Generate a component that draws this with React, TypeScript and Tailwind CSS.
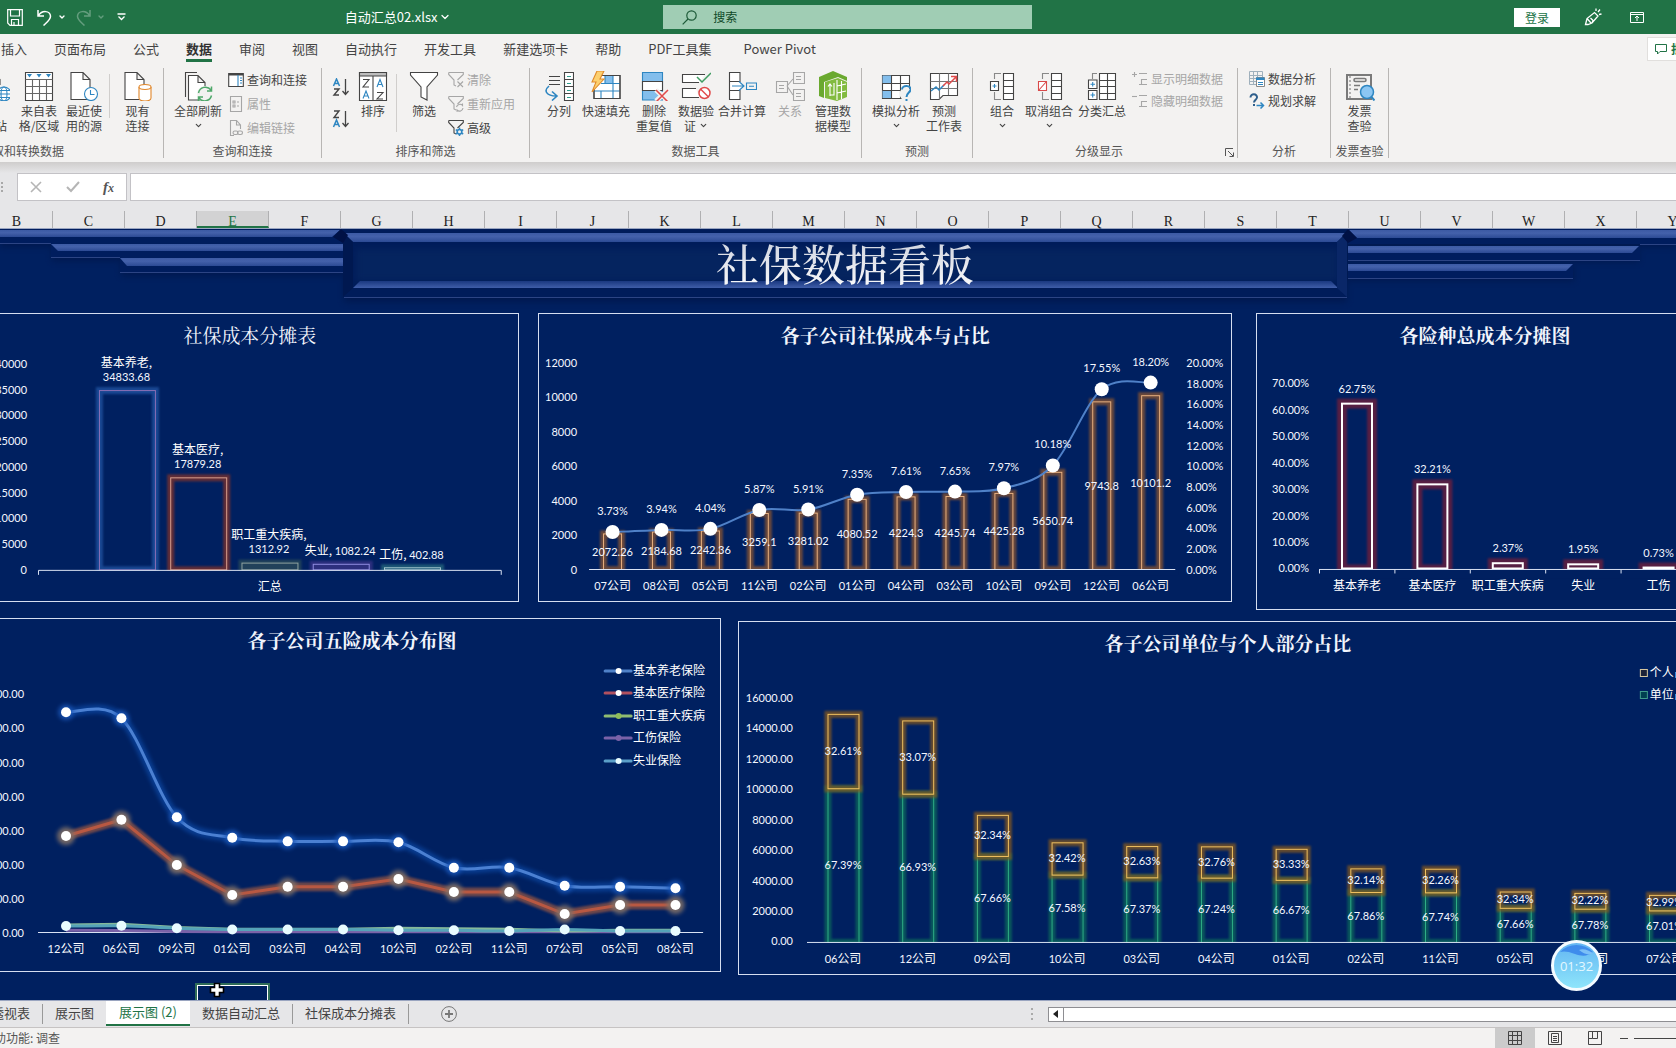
import React from "react";
import { ChevronDown } from "lucide-react";
import { clsx } from "clsx";

const INK = "#444444";
const BLUE = "#2e86c1";
const SKY = "#83beec";
const GREY = "#a6a6a6";

const LABEL = "fill-[#f4f7ff] text-[11px] font-['Lato','Noto_Sans_CJK_SC',sans-serif]";
const CJK = "fill-white text-[12px] font-['Noto_Sans_CJK_SC',sans-serif]";

type Point = { x: number; y: number };

// --- CHART DATA ---
const costShare = [
  { name: "基本养老", value: 34833.68, line: "#8a6fb5", glow: "#2458a8", wrap: true },
  { name: "基本医疗", value: 17879.28, line: "#d9a090", glow: "#8c3426", wrap: true },
  { name: "职工重大疾病", value: 1312.92, line: "#8fa3a0", glow: "#2f5058", wrap: true },
  { name: "失业", value: 1082.24, line: "#8f8ce0", glow: "#40368c", wrap: false },
  { name: "工伤", value: 402.88, line: "#a5c8d0", glow: "#2a7080", wrap: false },
];

const companyCost = [
  { id: "07", cost: 2072.26, rate: "3.73" },
  { id: "08", cost: 2184.68, rate: "3.94" },
  { id: "05", cost: 2242.36, rate: "4.04" },
  { id: "11", cost: 3259.1, rate: "5.87" },
  { id: "02", cost: 3281.02, rate: "5.91" },
  { id: "01", cost: 4080.52, rate: "7.35" },
  { id: "04", cost: 4224.3, rate: "7.61" },
  { id: "03", cost: 4245.74, rate: "7.65" },
  { id: "10", cost: 4425.28, rate: "7.97" },
  { id: "09", cost: 5650.74, rate: "10.18" },
  { id: "12", cost: 9743.8, rate: "17.55" },
  { id: "06", cost: 10101.2, rate: "18.20" },
];

const insuranceRate = [
  { name: "基本养老", rate: "62.75" },
  { name: "基本医疗", rate: "32.21" },
  { name: "职工重大疾病", rate: "2.37" },
  { name: "失业", rate: "1.95" },
  { name: "工伤", rate: "0.73" },
];

const lineCompanies = ["12", "06", "09", "01", "03", "04", "10", "02", "11", "07", "05", "08"];
const pension = [6476, 6300, 3388, 2788, 2682, 2682, 2653, 1906, 1906, 1376, 1347, 1300];
const medical = [2838, 3318, 1985, 1103, 1347, 1347, 1574, 1191, 1191, 544, 809, 809];
const illness = [225, 245, 150, 95, 95, 95, 125, 110, 100, 45, 70, 70];
const injury = [70, 60, 30, 20, 20, 20, 20, 20, 20, 20, 20, 20];
const jobless = [190, 200, 125, 90, 90, 90, 70, 65, 45, 90, 45, 45];

const lineLegend = [
  { name: "基本养老保险", color: "#4f81c8", dot: "#ffffff" },
  { name: "基本医疗保险", color: "#b0505f", dot: "#ffffff" },
  { name: "职工重大疾病", color: "#8fbc72", dot: "#8fbc5a" },
  { name: "工伤保险", color: "#7a62a8", dot: "#7a62a8" },
  { name: "失业保险", color: "#5b9fc8", dot: "#e8fbff" },
];

const unitShare = [
  { id: "06", unit: 10101.2, own: "32.61", corp: "67.39" },
  { id: "12", unit: 9743.8, own: "33.07", corp: "66.93" },
  { id: "09", unit: 5650.74, own: "32.34", corp: "67.66" },
  { id: "10", unit: 4425.28, own: "32.42", corp: "67.58" },
  { id: "03", unit: 4245.74, own: "32.63", corp: "67.37" },
  { id: "04", unit: 4224.3, own: "32.76", corp: "67.24" },
  { id: "01", unit: 4080.52, own: "33.33", corp: "66.67" },
  { id: "02", unit: 3281.02, own: "32.14", corp: "67.86" },
  { id: "11", unit: 3259.1, own: "32.26", corp: "67.74" },
  { id: "05", unit: 2242.36, own: "32.34", corp: "67.66" },
  { id: "08", unit: 2184.68, own: "32.22", corp: "67.78" },
  { id: "07", unit: 2072.26, own: "32.99", corp: "67.01" },
];

// --- CHART HELPERS ---
function smoothPath(points: Point[]) {
  let d = `M${points[0].x} ${points[0].y}`;
  for (let i = 0; i < points.length - 1; i++) {
    const before = points[i - 1] || points[i];
    const from = points[i];
    const to = points[i + 1];
    const after = points[i + 2] || to;
    d += ` C${from.x + (to.x - before.x) / 6} ${from.y + (to.y - before.y) / 6} ${to.x - (after.x - from.x) / 6} ${to.y - (after.y - from.y) / 6} ${to.x} ${to.y}`;
  }
  return d;
}

function straightPath(points: Point[]) {
  return points.map((p, i) => `${i ? "L" : "M"}${p.x} ${p.y}`).join(" ");
}

function Company({ id, x, y }: { id: string; x: number; y: number }) {
  return (
    <text x={x} y={y} textAnchor="middle" className={LABEL}>
      {id}
      <tspan className={CJK}>公司</tspan>
    </text>
  );
}

function ChartTitle({ x, bold = true, children }: { x: number; bold?: boolean; children: string }) {
  return (
    <text
      x={x}
      y={30}
      textAnchor="middle"
      className={clsx(
        "fill-[#f2f5fc] text-[19px] font-['Noto_Serif_CJK_SC','Noto_Sans_CJK_SC',sans-serif]",
        bold ? "font-bold" : "font-normal"
      )}
    >
      {children}
    </text>
  );
}

function GlowBar({ x, y, w, h, line, glow, stroke = 1 }: any) {
  return (
    <g fill="none">
      <rect x={x} y={y} width={w} height={h} stroke={glow} strokeWidth={7} className="blur-[1px]" opacity={0.7} />
      <rect x={x} y={y} width={w} height={h} stroke={line} strokeWidth={stroke} />
    </g>
  );
}

// --- CHARTS ---
function CostShareChart() {
  const base = 257;
  const y = (v: number) => base - (v / 40000) * 206;
  return (
    <svg viewBox="0 1 518 287" className="block w-full" role="img" aria-label="社保成本分摊表">
      <ChartTitle x={250} bold={false}>社保成本分摊表</ChartTitle>
      {Array.from({ length: 9 }, (_, i) => i * 5000).map((v) => (
        <text key={v} x={27} y={y(v) + 4} textAnchor="end" className={LABEL}>
          {v}
        </text>
      ))}
      {costShare.map((item, i) => {
        const left = 99.5 + i * 71.3;
        const top = y(item.value);
        return (
          <g key={item.name}>
            <GlowBar x={left} y={top} w={56} h={base - top} line={item.line} glow={item.glow} />
            {item.wrap ? (
              <>
                <text x={left + 27} y={top - 24} textAnchor="middle" className={CJK}>
                  {item.name},
                </text>
                <text x={left + 27} y={top - 10} textAnchor="middle" className={LABEL}>
                  {item.value}
                </text>
              </>
            ) : (
              <text x={left + 27} y={top - 9} textAnchor="middle" className={CJK}>
                {item.name}, <tspan className={LABEL}>{item.value}</tspan>
              </text>
            )}
          </g>
        );
      })}
      <rect x={36} y={base + 1} width={468} height={6} className="fill-[#002060]" />
      <path d={`M38.5 ${base + 5} v-4.5 h463 v4.5`} fill="none" stroke="#d9e2f3" />
      <text x={270} y={278} textAnchor="middle" className={CJK}>汇总</text>
    </svg>
  );
}

function CompanyCostChart() {
  const base = 256.5;
  const points = companyCost.map((c, i) => ({ x: 74.5 + i * 48.9, y: base + 1 - (Number(c.rate) / 20) * 206.5 }));
  return (
    <svg viewBox="1 1 692 287" className="block w-full" role="img" aria-label="各子公司社保成本与占比">
      <ChartTitle x={347}>各子公司社保成本与占比</ChartTitle>
      {[0, 2000, 4000, 6000, 8000, 10000, 12000].map((v) => (
        <text key={v} x={39} y={base - (v / 12000) * 206.5 + 4} textAnchor="end" className={LABEL}>
          {v}
        </text>
      ))}
      {Array.from({ length: 11 }, (_, i) => i * 2).map((v) => (
        <text key={v} x={648} y={base - (v / 20) * 206.5 + 4} className={LABEL}>
          {v.toFixed(2)}%
        </text>
      ))}
      {companyCost.map((c, i) => {
        const h = (c.cost / 12000) * 206.5;
        return <GlowBar key={c.id} x={points[i].x - 9} y={base - h} w={18} h={h} line="#e8b080" glow="#96592c" />;
      })}
      <rect x={48} y={base} width={592} height={6} className="fill-[#002060]" />
      <path d={`M51 ${base} h586`} stroke="#d9e2f3" />
      <path d={smoothPath(points)} fill="none" stroke="#4f81c8" strokeWidth={2} />
      {companyCost.map((c, i) => {
        const p = points[i];
        return (
          <g key={c.id}>
            <circle cx={p.x} cy={p.y} r={7} fill="#ffffff" />
            <text x={p.x} y={p.y - 17} textAnchor="middle" className={LABEL}>
              {c.rate}%
            </text>
            <text x={p.x} y={base - (c.cost / 24000) * 206.5 + 4} textAnchor="middle" className={LABEL}>
              {c.cost}
            </text>
            <Company id={c.id} x={p.x} y={277} />
          </g>
        );
      })}
    </svg>
  );
}

function InsuranceRateChart() {
  const base = 256.5;
  return (
    <svg viewBox="1 1 419 295" className="block w-full" role="img" aria-label="各险种总成本分摊图">
      <ChartTitle x={229}>各险种总成本分摊图</ChartTitle>
      {Array.from({ length: 8 }, (_, i) => i * 10).map((v) => (
        <text key={v} x={53} y={base - (v / 70) * 185 + 3} textAnchor="end" className={LABEL}>
          {v.toFixed(2)}%
        </text>
      ))}
      {insuranceRate.map((item, i) => {
        const x = 101 + i * 75.4;
        const h = (Number(item.rate) / 70) * 185;
        return (
          <g key={item.name}>
            <rect x={x - 15} y={base - h} width={30} height={h} fill="none" stroke="#6c1f3c" strokeWidth={10} className="blur-[1px]" opacity={0.8} />
            <rect x={x - 15} y={base - h} width={30} height={Math.max(h - 1, 2)} fill="none" stroke="#ffffff" strokeWidth={2} />
            <text x={x} y={base - h - 11} textAnchor="middle" className={LABEL}>
              {item.rate}%
            </text>
          </g>
        );
      })}
      <rect x={60} y={base} width={360} height={9} className="fill-[#002060]" />
      {insuranceRate.map((item, i) => {
        const x = 101 + i * 75.4;
        return (
          <g key={item.name}>
            <text x={x} y={277} textAnchor="middle" className={CJK}>
              {item.name}
            </text>
            <path d={`M${x - 37.5} ${base + 4} v-4`} stroke="#d9e2f3" />
          </g>
        );
      })}
      <path d={`M63 ${base} h357`} stroke="#d9e2f3" />
    </svg>
  );
}

function InsuranceLineChart() {
  const base = 314.5;
  const toPoints = (list: number[]) => list.map((v, i) => ({ x: 66 + i * 55.4, y: base - (v / 1000) * 34 }));
  const blue = toPoints(pension);
  const red = toPoints(medical);
  const teal = toPoints(jobless);
  return (
    <svg viewBox="0 1 720 352" className="block w-full" role="img" aria-label="各子公司五险成本分布图">
      <ChartTitle x={352}>各子公司五险成本分布图</ChartTitle>
      {Array.from({ length: 8 }, (_, i) => i * 1000).map((v) => (
        <text key={v} x={24} y={base - (v / 1000) * 34 + 4} textAnchor="end" className={LABEL}>
          {v.toFixed(2)}
        </text>
      ))}
      <path d={`M38 ${base} h665`} stroke="#d9e2f3" />
      <g fill="none">
        <path d={smoothPath(blue)} stroke="#0d4aa8" strokeWidth={9} opacity={0.7} className="blur-[2px]" />
        <path d={smoothPath(blue)} stroke="#4b80d2" strokeWidth={3} />
        <path d={straightPath(red)} stroke="#7c4c48" strokeWidth={9} opacity={0.9} className="blur-[1px]" />
        <path d={straightPath(red)} stroke="#b85842" strokeWidth={3} />
        <path d={straightPath(toPoints(injury))} stroke="#7a62a8" strokeWidth={3} />
        <path d={straightPath(toPoints(illness))} stroke="#85b99a" strokeWidth={3} />
        <path d={smoothPath(teal)} stroke="#55a3b8" strokeWidth={3} />
      </g>
      {blue.map((p, i) => (
        <g key={lineCompanies[i]}>
          <circle cx={p.x} cy={p.y} r={8} fill="#1a56b8" className="blur-[2px]" opacity={0.8} />
          <circle cx={p.x} cy={p.y} r={5} fill="#ffffff" />
          <circle cx={red[i].x} cy={red[i].y} r={9} fill="#807068" className="blur-[2px]" opacity={0.9} />
          <circle cx={red[i].x} cy={red[i].y} r={5} fill="#ffffff" />
          <circle cx={teal[i].x} cy={teal[i].y} r={5} fill="#e8fbff" />
          <Company id={lineCompanies[i]} x={p.x} y={335} />
        </g>
      ))}
      {lineLegend.map((item, i) => {
        const y = 53 + Math.floor(i * 22.5);
        return (
          <g key={item.name}>
            <path d={`M605 ${y} h26`} stroke={item.color} strokeWidth={3} strokeLinecap="round" />
            <circle cx={618.5} cy={y} r={3} fill={item.dot} />
            <text x={633} y={y + 4} className={CJK}>
              {item.name}
            </text>
          </g>
        );
      })}
    </svg>
  );
}

function UnitShareChart() {
  const base = 321.5;
  const scale = (v: number) => (v / 16000) * 243.5;
  return (
    <svg viewBox="1 1 937 352" className="block w-full" role="img" aria-label="各子公司单位与个人部分占比">
      <ChartTitle x={490}>各子公司单位与个人部分占比</ChartTitle>
      {Array.from({ length: 9 }, (_, i) => i * 2000).map((v) => (
        <text key={v} x={55} y={base - scale(v) + 3} textAnchor="end" className={LABEL}>
          {v.toFixed(2)}
        </text>
      ))}
      {unitShare.map((c, i) => {
        const x = 105 + i * 74.7;
        const unit = scale(c.unit);
        const total = scale((c.unit / Number(c.corp)) * 100);
        return (
          <g key={c.id}>
            <GlowBar x={x - 15} y={base - unit} w={31} h={unit} line="#2fae86" glow="#0d6e5a" />
            <GlowBar x={x - 15} y={base - total} w={31} h={total - unit} line="#f0c060" glow="#8c5c1c" />
            <text x={x} y={base - unit / 2 + 3} textAnchor="middle" className={LABEL}>
              {c.corp}%
            </text>
            <text x={x} y={base - (total + unit) / 2 + 3} textAnchor="middle" className={LABEL}>
              {c.own}%
            </text>
          </g>
        );
      })}
      <rect x={60} y={base} width={878} height={6} className="fill-[#002060]" />
      <path d={`M69 ${base} h869`} stroke="#d9e2f3" />
      {unitShare.map((c, i) => (
        <Company key={c.id} id={c.id} x={105 + i * 74.7} y={342} />
      ))}
      <rect x={902.5} y={48.5} width={7} height={7} fill="#1c2238" stroke="#d8c8a0" />
      <text x={912} y={56} className={CJK}>个人占比</text>
      <rect x={902.5} y={70.5} width={7} height={7} fill="#003f50" stroke="#3f9c8c" />
      <text x={912} y={78} className={CJK}>单位占比</text>
    </svg>
  );
}

function Banner() {
  return (
    <div className="relative">
      <svg viewBox="0 0 1676 84" className="block w-full" aria-hidden="true">
        <defs>
          <linearGradient id="shine" x1="0" y1="0" x2="0" y2="1">
            <stop offset="0" stopColor="#3c5aa4" />
            <stop offset="0.4" stopColor="#4461ab" />
            <stop offset="1" stopColor="#2c4a94" />
          </linearGradient>
          <linearGradient id="shineUp" x1="0" y1="0" x2="0" y2="1">
            <stop offset="0" stopColor="#1a3880" />
            <stop offset="1" stopColor="#3f5da8" />
          </linearGradient>
        </defs>
        {/* soft shadow under every plate */}
        <g fill="#001445" opacity="0.6" className="blur-[3px]">
          <rect x="0" y="5" width="341" height="13" />
          <rect x="52" y="19" width="291" height="13" />
          <rect x="121" y="33" width="222" height="14" />
          <rect x="344" y="4" width="1003" height="69" />
          <rect x="1348" y="4" width="328" height="14" />
          <rect x="1348" y="20" width="291" height="13" />
          <rect x="1348" y="38" width="226" height="14" />
        </g>
        <g fill="#001d5e">
          <rect x="0" y="0" width="343" height="14" />
          <rect x="51" y="14" width="292" height="14" />
          <rect x="120" y="28" width="223" height="15" />
          <rect x="1348" y="0" width="328" height="15" />
          <rect x="1348" y="17" width="292" height="14" />
          <rect x="1348" y="35" width="225" height="14" />
        </g>
        <g fill="url(#shine)">
          <path d="M0 1H340L332 8H0Z" />
          <path d="M51 15H343V22H58Z" />
          <path d="M120 29H343V37H127Z" />
          <path d="M1349 1H1676V9H1357Z" />
          <path d="M1348 17H1639L1632 24H1348Z" />
          <path d="M1348 35H1573L1566 42H1348Z" />
        </g>
        <rect x="343" y="0" width="1004" height="68" fill="#001c5a" />
        <rect x="356" y="20" width="982" height="32" fill="#05245f" className="blur-[3px]" />
        <path d="M344 4H1346L1337 13H353Z" fill="url(#shine)" />
        <path d="M360 52H1331L1338 59H353Z" fill="url(#shineUp)" />
        <path d="M343 4L353 13V59L343 68Z" fill="#001850" />
        <path d="M1347 4L1337 13V59L1347 68Z" fill="#0a2768" />
        <path d="M333 8L341 0L348 6L343 14ZM1342 7L1348 0L1357 9L1348 14Z" fill="#001145" />
        <path
          d="M0 14.5H51M51 28.5H120M120 43.5H343M344 68.5H1347M1640 15.5H1676M1348 31.5H1640M1348 49.5H1573"
          stroke="#2c4484"
        />
      </svg>
      <h1 className="absolute inset-x-0 top-1 bg-linear-to-b from-[#c9cedb] to-white bg-clip-text pl-[14px] text-center font-['Noto_Serif_CJK_SC','Noto_Sans_CJK_SC',sans-serif] text-[43px] leading-[60px] font-medium text-transparent">
        社保数据看板
      </h1>
    </div>
  );
}

// --- ICONS ---
function Icon({ size = 30, box = 30, children }: { size?: number; box?: number; children: React.ReactNode }) {
  return (
    <svg
      width={size}
      height={size}
      viewBox={`0 0 ${box} ${box}`}
      fill="none"
      stroke={INK}
      strokeWidth={1.1}
      className="shrink-0"
      aria-hidden="true"
    >
      {children}
    </svg>
  );
}

const page = "M2 1.5H14L21 8.5V28.5H2ZM14 1.5V8.5H21";

const WebIcon = () => (
  <Icon>
    <path d="M4 1.5H14L20 8.5V14M14 1.5V8.5H20M4 1.5V28.5H12" fill="#fff" />
    <g stroke={BLUE} transform="translate(1 0)">
      <circle cx="23" cy="23" r="7" fill="#fff" />
      <ellipse cx="23" cy="23" rx="3" ry="7" />
      <path d="M16 23H30M17 19.5H29M17 26.5H29" />
    </g>
  </Icon>
);

const TableIcon = () => (
  <Icon>
    <path d="M1.5 1.5H28.5V29.5H1.5Z" fill="#fff" />
    <path d="M1.5 8.5H28.5M1.5 15.5H28.5M1.5 22.5H28.5M8.5 8V29M15.5 8V29M22.5 8V29" stroke="#666" />
    <path d="M3 3h5l-2.5 3.5ZM12.5 3h5l-2.5 3.5ZM22 3h5l-2.5 3.5Z" fill={BLUE} stroke="none" />
  </Icon>
);

const RecentIcon = () => (
  <Icon>
    <path d={page} fill="#fff" />
    <circle cx="22" cy="23" r="6.5" fill="#fff" stroke={BLUE} />
    <path d="M21.5 19V23.5H25.5" stroke={BLUE} />
  </Icon>
);

const ConnectionIcon = () => (
  <Icon>
    <path d={page} fill="#fff" />
    <path d="M16 16V27C16 31 28 31 28 27V16" fill="#fff" stroke="#e0872b" />
    <ellipse cx="22" cy="16" rx="6" ry="2.5" fill="#fff" stroke="#e0872b" />
  </Icon>
);

const RefreshAllIcon = () => (
  <Icon>
    <path d="M2.5 26V1.5H14" />
    <path d="M5.5 4.5H15L22 11.5V29H5.5ZM15 4.5V11.5H22" fill="#fff" />
    <circle cx="22" cy="23" r="8" fill="#f3f2f1" stroke="none" />
    <path
      d="M15.5 22A7 7 0 0 1 28 19M28.5 15.5V20H24M28.5 24.5A7 7 0 0 1 16 27M15.5 30.5V26H20"
      stroke="#4ea86a"
      strokeWidth="1.5"
    />
  </Icon>
);

const SortIcon = () => (
  <Icon>
    <path d="M1.5 1.5H28.5V29.5H1.5Z" fill="#fff" />
    <path d="M1.5 1.5H28.5V5H1.5Z" fill="#bdbdbd" />
    <path d="M15 5V29" />
    <path d="M5 8.5H11L5 16H11M19 21.5H25L19 28H25" />
    <path d="M5 27.5L8 20L11 27.5M6 25H10M19 16L22 8.5L25 16M20 13.5H24" stroke={BLUE} />
  </Icon>
);

const FilterIcon = () => (
  <Icon>
    <path d="M1.5 1.5H28.5V4L18 16V29L12 26V16L1.5 4Z" fill="#fff" />
  </Icon>
);

const SplitIcon = () => (
  <Icon>
    <path d="M5 5.5H16M5 9.5H16M5 13.5H16" />
    <path d="M20.5 1.5H29.5V29.5H20.5ZM20.5 8.5H29.5M20.5 15.5H29.5M20.5 22.5H29.5" fill="#fff" />
    <path d="M23 5.5H27M23 12.5H27M23 19.5H27M23 26.5H27" stroke="#2f9c8c" />
    <path d="M5 15C-1 20 3 25 12 25M8 20.5L13 25L8 29.5" stroke={BLUE} strokeWidth="1.6" />
  </Icon>
);

const FlashFillIcon = () => (
  <Icon>
    <path d="M4 4.5H29V27.5H3V18" fill="#fff" />
    <path d="M14 4.5H22V12H14Z" fill={SKY} stroke="none" />
    <path d="M3 20H29M10 12.5H29M14 4.5V12M22 4.5V27M10 20V27" stroke={BLUE} />
    <path d="M4 4.5H29V27.5H3V18" />
    <path d="M6 0H13L9 8H13L1 21L5 11H1Z" fill="#fcd070" stroke="#e08a2a" />
  </Icon>
);

const DedupeIcon = () => (
  <Icon>
    <path d="M3.5 1.5H23.5V29H3.5Z" fill={SKY} stroke={BLUE} />
    <path d="M3.5 10.5H23.5V19.5H3.5Z" fill="#fff" stroke={INK} />
    <path d="M17 19L29 30M29 19L17 30" stroke="#f3f2f1" strokeWidth="5" />
    <path d="M17 19L29 31M29 19L17 31" stroke="#e04a4a" strokeWidth="1.5" />
  </Icon>
);

const ValidateIcon = () => (
  <Icon>
    <path d="M24 3.5H1.5V11.5H18M15 17.5H1.5V26.5H18" fill="#fff" />
    <path d="M16 6L21 11L30 2" stroke="#3f9c62" strokeWidth="1.5" />
    <circle cx="23.5" cy="22" r="5.5" fill="#fff" stroke="#e04a4a" strokeWidth="1.5" />
    <path d="M19.5 18L27.5 26" stroke="#e04a4a" strokeWidth="1.5" />
  </Icon>
);

const ConsolidateIcon = () => (
  <Icon>
    <path d="M13 11V1.5H2.5V28.5H13V19M2.5 10.5H13M2.5 19.5H13" fill="#fff" />
    <path d="M5 15H17M12 10.5L17 15L12 19.5M19.5 12H29.5V18.5H19.5ZM22 15.2H27" stroke={BLUE} />
  </Icon>
);

const RelationIcon = () => (
  <Icon>
    <g stroke={GREY}>
      <path d="M1.5 10.5H12.5V21.5H1.5ZM18.5 1.5H29.5V12.5H18.5ZM18.5 18.5H29.5V29.5H18.5Z" />
      <path d="M4 14.5H9M4 17.5H9M21 5.5H26M21 8.5H26M21 22.5H26M21 25.5H26M12 15L18 8M12 15L18 24" />
    </g>
  </Icon>
);

const ModelIcon = () => (
  <Icon>
    <path d="M1 6L15 0L29 6V10L20 6L6 11V27L1 25Z" fill="#6aa92f" stroke="none" />
    <path d="M7 11L20 7L29 11V26L19 30L7 27Z" fill="#82bb3f" stroke="none" />
    <path d="M19 9V29M19 15L28 13M19 22L28 20M23.5 10V28M12 13V25M10 15.5L12 13L14 15.5M12 24H16V12" stroke="#fff" />
  </Icon>
);

const WhatIfIcon = () => (
  <Icon>
    <path d="M1.5 4.5H28.5V27.5H1.5Z" fill="#fff" />
    <path d="M1.5 4.5H10V12H1.5ZM1.5 19.5H10V27H1.5Z" fill={SKY} stroke="none" />
    <path d="M1.5 12.5H28.5M1.5 19.5H28.5M10.5 4.5V27M19.5 4.5V27" />
    <circle cx="25" cy="23" r="6.5" fill="#f3f2f1" stroke="none" />
    <path d="M21 18.5C21 13.5 30.5 14 29.5 19C29 21.5 25.5 22 25.5 26M25.5 28V30.5" stroke={BLUE} strokeWidth="2" />
  </Icon>
);

const ForecastIcon = () => (
  <Icon>
    <path d="M1.5 2.5H28.5V24.5H14L10 28.5H1.5Z" fill="#fff" />
    <path d="M1.5 10.5H28.5M1.5 17.5H28.5M10.5 2.5V28M19.5 2.5V24" stroke="#777" />
    <path d="M2 20L7 16L10 19L15 14" stroke={BLUE} strokeWidth="1.5" />
    <path d="M14 15L18 11L20 13L27 6M22 5.5H27.5V11" stroke="#e04a4a" strokeWidth="1.5" />
  </Icon>
);

const GroupIcon = () => (
  <Icon>
    <path d="M16.5 2.5H26.5V28.5H16.5ZM16.5 9.5H26.5M16.5 15.5H26.5M16.5 22.5H26.5" fill="#fff" />
    <path d="M14 2.5H7.5V8M7.5 21V28.5H14" stroke="#888" />
    <path d="M3.5 10.5H11.5V19.5H3.5Z" fill="#fff" />
    <path d="M5.5 15H9.5M7.5 13V17" stroke={BLUE} />
  </Icon>
);

const UngroupIcon = () => (
  <Icon>
    <path d="M17.5 2.5H27.5V28.5H17.5ZM17.5 9.5H27.5M17.5 15.5H27.5M17.5 22.5H27.5" fill="#fff" />
    <path d="M15 2.5H8.5V8M8.5 21V28.5H15" stroke="#888" />
    <path d="M4.5 10.5H12.5V19.5H4.5ZM4.5 19.5L12.5 10.5" fill="#fff" stroke="#d94a4a" />
  </Icon>
);

const SubtotalIcon = () => (
  <Icon>
    <path d="M12.5 2.5H28.5V28.5H12.5ZM12.5 9.5H28.5M12.5 15.5H28.5M12.5 22.5H28.5M20.5 2.5V28.5" fill="#fff" />
    <path d="M10 2.5H5.5V8" stroke="#888" />
    <path d="M1.5 9H10V17.5H1.5ZM1.5 19.5H10V28.5H1.5Z" fill="#fff" />
    <path d="M3.5 13.2H8M5.7 11V15.5M3.5 24H8M5.7 21.5V26.5" stroke={BLUE} />
  </Icon>
);

const InvoiceIcon = () => (
  <Icon>
    <path d="M2 4H26V28H2Z" stroke="#7a7a7a" strokeWidth="2" />
    <path d="M5 5V28" stroke="#7a7a7a" strokeDasharray="2 2" />
    <rect x="9" y="7.5" width="12" height="3" rx="1.5" stroke="#7a7a7a" strokeWidth="1.6" />
    <path d="M9 14.5H15M9 18.5H13" stroke="#7a7a7a" strokeWidth="1.6" />
    <circle cx="22" cy="21" r="6.5" fill="#8cc6f2" stroke={BLUE} strokeWidth="1.5" />
    <path d="M26.5 26L29.5 29.5" stroke={BLUE} strokeWidth="2" />
  </Icon>
);

function SortArrow({ reverse = false }: { reverse?: boolean }) {
  return (
    <Icon size={18} box={18}>
      <path d={reverse ? "M2 1H7L2 7.5H7" : "M2 11H7L2 17H7"} strokeWidth="1.4" />
      <path
        d={reverse ? "M1.5 17L4.5 10L7.5 17M2.5 14.5H6.5" : "M1.5 8L4.5 1L7.5 8M2.5 5.5H6.5"}
        stroke={BLUE}
        strokeWidth="1.5"
      />
      <path d="M13.5 1V16.5M10.5 13L13.5 16.5L16.5 13" strokeWidth="1.3" />
    </Icon>
  );
}

const PaneIcon = () => (
  <Icon size={16} box={16}>
    <path d="M.7 1.5H15.3V14.5H.7Z" fill="#fff" />
    <path d="M.7 2.5H15.3" strokeWidth="2" />
    <path d="M10 3V14" stroke={BLUE} />
    <path d="M12 6H14M12 8.5H14M12 11H14" stroke={BLUE} />
  </Icon>
);

const PropertyIcon = () => (
  <Icon size={16} box={16}>
    <g stroke={GREY}>
      <path d="M2.5 .5H13.5V15.5H2.5Z" />
      <path d="M5 5H7V7H5ZM5 9H7V11H5ZM9 6H11M9 10H11" />
    </g>
  </Icon>
);

const EditLinkIcon = () => (
  <Icon size={16} box={16}>
    <g stroke={GREY}>
      <path d="M6 15.5H2.5V.5H8.5L12.5 5V9M8.5 .5V5H12.5" />
      <rect x="5" y="11" width="5" height="3.5" rx="1.7" />
      <rect x="9.5" y="11" width="5" height="3.5" rx="1.7" />
    </g>
  </Icon>
);

function SmallFilter({ kind }: { kind: "clear" | "reapply" | "advanced" }) {
  const on = kind === "advanced";
  return (
    <Icon size={16} box={16}>
      <path d="M.7 .5H15.3V2.5L9.5 8M.7 .5V2.5L6 8V13L8 14" stroke={on ? INK : GREY} />
      {kind === "clear" && <path d="M9.5 9.5L15 15M15 9.5L9.5 15" stroke={GREY} />}
      {kind === "reapply" && (
        <path d="M8.5 11A3.5 3.5 0 0 1 14.5 9.5V7.5M15 12A3.5 3.5 0 0 1 9 14V15.7" stroke={GREY} />
      )}
      {on && (
        <g stroke={BLUE}>
          <circle cx="11.5" cy="11.8" r="2.3" strokeWidth="1.6" />
          <path
            d="M11.5 7.5V9M11.5 14.5V16M7.8 9.7L9.2 10.5M13.8 13.2L15.2 14M15.2 9.7L13.8 10.5M9.2 13.2L7.8 14"
            strokeWidth="1.5"
          />
        </g>
      )}
    </Icon>
  );
}

function DetailIcon({ plus = false }: { plus?: boolean }) {
  return (
    <Icon size={16} box={16}>
      <g stroke={GREY}>
        <path d={plus ? "M0 3.5H5M2.5 1V6" : "M0 3.5H5"} />
        <path d="M7 2.5H15M9.5 8.5H15M7 13.5H15M9.5 8V13" />
      </g>
    </Icon>
  );
}

const AnalysisIcon = () => (
  <Icon size={16} box={16}>
    <path d="M.5 .5H13.5V13.5H.5ZM.5 4.5H13.5M.5 7.5H8M.5 10.5H8M4.5 .5V14M8.5 .5V6" stroke="#9fb0bc" strokeWidth="1" />
    <path d="M7.5 6.5H15.5V15.5H7.5Z" fill="#fff" stroke="#888" strokeWidth="1" />
    <path d="M7 6.5H15.5V9H7Z" fill={BLUE} stroke="none" />
    <path d="M9 11.5H14M9 13.5H14" stroke={BLUE} strokeWidth="1" />
  </Icon>
);

const SolverIcon = () => (
  <Icon size={16} box={16}>
    <path d="M1.5 4.5C1.5 0 8.5 .5 8 4.5C7.8 6.5 5 7 5 9.5M5 11V13" stroke="#2f5f8c" strokeWidth="2" />
    <path d="M7.5 12.5H14.5M11.5 9.5L14.5 12.5L11.5 15.5" stroke={BLUE} strokeWidth="1.5" />
  </Icon>
);

// --- RIBBON PARTS ---
function BigButton({ icon, lines, width, arrow, muted }: any) {
  return (
    <button
      type="button"
      disabled={muted}
      className={clsx("flex shrink-0 flex-col items-center pt-[3px]", width, muted ? "text-[#a6a6a6]" : "text-[#444]")}
    >
      {icon}
      <span className="mt-[2px] block text-[12px] leading-[15px] whitespace-nowrap">{lines[0]}</span>
      <span className="flex h-[15px] items-center text-[12px] leading-[15px] whitespace-nowrap">
        {lines[1]}
        {arrow && <ChevronDown className={clsx("h-[9px] w-[9px]", lines[1] && "ml-[3px]")} strokeWidth={3} />}
      </span>
    </button>
  );
}

function SmallButton({ icon, label, muted, height = "h-6" }: any) {
  return (
    <button
      type="button"
      disabled={muted}
      className={clsx(
        "flex items-center gap-[3px] text-[12px] whitespace-nowrap",
        height,
        muted ? "text-[#a6a6a6]" : "text-[#444]"
      )}
    >
      {icon}
      {label}
    </button>
  );
}

function Group({ label, className, launcher, children }: any) {
  return (
    <section className={clsx("flex h-[90px] shrink-0 flex-col border-r border-[#b8b6b4]", className)} aria-label={label}>
      <div className="flex flex-1">{children}</div>
      <div className="flex h-[14px] items-center text-[12px] leading-[14px] text-[#555]">
        <span className="flex-1 text-center whitespace-nowrap">{label}</span>
        {launcher && (
          <button type="button" aria-label="分级显示设置" className="pr-[2px]">
            <svg width="10" height="10" viewBox="0 0 10 10" fill="none" stroke="#555" className="mt-1">
              <path d="M.5 8V.5H8M3 3L8 8M8.5 4.5V8.5H4.5" />
            </svg>
          </button>
        )}
      </div>
    </section>
  );
}

const Divider = ({ className }: { className: string }) => <div className={clsx("mt-[6px] w-px bg-[#d0cecc]", className)} />;

const ribbonTabs = ["插入", "页面布局", "公式", "数据", "审阅", "视图", "自动执行", "开发工具", "新建选项卡", "帮助", "PDF工具集", "Power Pivot"];
const columns = "BCDEFGHIJKLMNOPQRSTUVWXY".split("");

function TitleBar() {
  return (
    <header className="flex h-[34px] shrink-0 items-center bg-[#217346] text-white">
      <div className="flex flex-[664_1_0%] items-center pr-[25px] pl-[7px]">
        <button type="button" aria-label="保存">
          <svg width="16" height="17" viewBox="0 0 16 17" fill="none" stroke="#fff" strokeWidth="1.2">
            <path d="M.7 .7H15.3V16.3H3L.7 14ZM3.5 .7V7H12.5V.7M4.5 16V10.5H11.5V16M7 13V16" />
          </svg>
        </button>
        <button type="button" aria-label="撤消" className="ml-[14px] flex items-center gap-[6px]">
          <svg width="15" height="17" viewBox="0 0 15 17" fill="none" stroke="#fff" strokeWidth="1.5">
            <path d="M1 1V7H7M1.5 6.5C5 1 13 1.5 13.5 7C13.7 10.5 10 13 6.5 16.5" />
          </svg>
          <ChevronDown className="h-2 w-2" strokeWidth={4} />
        </button>
        <button type="button" disabled aria-label="恢复" className="ml-[10px] flex items-center gap-[6px] opacity-30">
          <svg width="15" height="17" viewBox="0 0 15 17" fill="none" stroke="#fff" strokeWidth="1.5">
            <path d="M14 1V7H8M13.5 6.5C10 1 2 1.5 1.5 7C1.3 10.5 5 13 8.5 16.5" />
          </svg>
          <ChevronDown className="h-2 w-2" strokeWidth={4} />
        </button>
        <button type="button" aria-label="自定义快速访问工具栏" className="ml-[12px]">
          <svg width="9" height="8" viewBox="0 0 9 8" fill="none" stroke="#fff" strokeWidth="1.3">
            <path d="M.5 1H8.5M1.5 3.5L4.5 6.5L7.5 3.5" />
          </svg>
        </button>
        <button type="button" className="mx-auto flex items-center gap-[2px] pl-8 text-[13px]">
          自动汇总02.xlsx
          <ChevronDown className="h-3 w-3" strokeWidth={2.5} />
        </button>
      </div>
      <label className="flex h-6 w-[22%] items-center bg-[#a0cdb4] pl-[19px]">
        <svg width="15" height="15" viewBox="0 0 15 15" fill="none" stroke="#1d5a38" strokeWidth="1.2">
          <circle cx="9.5" cy="5.5" r="4.7" />
          <path d="M6 9L.7 14.3" />
        </svg>
        <input
          type="search"
          placeholder="搜索"
          aria-label="搜索"
          className="ml-4 min-w-0 flex-1 bg-transparent text-[12px] text-[#0f4a28] outline-none placeholder:text-[#0f4a28]"
        />
      </label>
      <div className="flex flex-[644_1_0%] items-center justify-end pr-8">
        <button type="button" className="h-[19px] w-[46px] bg-white text-[12px] leading-[19px] text-[#217346]">
          登录
        </button>
        <button type="button" aria-label="墨迹" className="ml-[24px]">
          <svg width="18" height="18" viewBox="0 0 18 18" fill="none" stroke="#fff" strokeWidth="1.3">
            <path d="M1.5 16.5L3 10.5L10.5 4.5L14 8L8 15L4 16.5ZM3 10.5L7 15M8 15L9 12.5L6.5 10" />
            <path d="M12 3L12 .5M14 4L16 1.5M15 6.5L17.5 6" />
          </svg>
        </button>
        <button type="button" aria-label="功能区显示选项" className="ml-[28px]">
          <svg width="14" height="11" viewBox="0 0 14 11" fill="none" stroke="#fff">
            <path d="M.5 .5H13.5V10.5H.5ZM.5 2.5H13.5M7 9V4.5M5 6L7 4L9 6" />
          </svg>
        </button>
      </div>
    </header>
  );
}

function Ribbon() {
  return (
    <div className="shrink-0 overflow-hidden bg-[#f3f2f1]">
      <div className="flex h-8 items-start justify-between">
        <nav className="flex gap-[27px] pl-px">
          {ribbonTabs.map((tab) => (
            <button
              key={tab}
              type="button"
              className={clsx(
                "h-[28px] border-b-[3px] pt-1 text-[13px] leading-[20px] whitespace-nowrap",
                tab === "数据" ? "border-[#217346] font-bold text-[#333]" : "border-transparent text-[#444]",
                tab === "Power Pivot" && "ml-[5px]"
              )}
            >
              {tab}
            </button>
          ))}
        </nav>
        <button
          type="button"
          className="-mr-[27px] mt-[3px] flex h-6 items-center gap-1 border border-[#e1dfdd] bg-white px-[7px] text-[12px] font-bold text-[#217346]"
        >
          <svg width="12" height="12" viewBox="0 0 12 12" fill="none" stroke="#217346">
            <path d="M.5 1.5H11.5V8.5H5L2.5 11V8.5H.5Z" />
          </svg>
          批注
        </button>
      </div>
      <div className="flex h-24 pt-[2px]">
        <Group label="获取和转换数据" className="-ml-[119px] w-[283px] [&>div:first-child]:justify-end">
          <BigButton icon={<WebIcon />} lines={["自", "网站"]} width="w-11" />
          <BigButton icon={<TableIcon />} lines={["来自表", "格/区域"]} width="w-11" />
          <BigButton icon={<RecentIcon />} lines={["最近使", "用的源"]} width="w-[46px]" />
          <Divider className="mx-[2px] h-[44px]" />
          <BigButton icon={<ConnectionIcon />} lines={["现有", "连接"]} width="w-[51px]" />
        </Group>
        <Group label="查询和连接" className="w-[158px] [&>div:first-child]:pl-2">
          <BigButton icon={<RefreshAllIcon />} lines={["全部刷新", ""]} width="w-[52px]" arrow />
          <div className="ml-1">
            <SmallButton icon={<PaneIcon />} label="查询和连接" />
            <SmallButton icon={<PropertyIcon />} label="属性" muted />
            <SmallButton icon={<EditLinkIcon />} label="编辑链接" muted />
          </div>
        </Group>
        <Group label="排序和筛选" className="w-[208px]">
          <div className="ml-[10px] flex w-[23px] flex-col gap-[14px] pt-[10px]">
            <button type="button" aria-label="升序">
              <SortArrow />
            </button>
            <button type="button" aria-label="降序">
              <SortArrow reverse />
            </button>
          </div>
          <BigButton icon={<SortIcon />} lines={["排序", ""]} width="w-9" />
          <Divider className="mx-[5px] h-[58px]" />
          <BigButton icon={<FilterIcon />} lines={["筛选", ""]} width="w-11" />
          <div className="ml-[2px]">
            <SmallButton icon={<SmallFilter kind="clear" />} label="清除" muted />
            <SmallButton icon={<SmallFilter kind="reapply" />} label="重新应用" muted />
            <SmallButton icon={<SmallFilter kind="advanced" />} label="高级" />
          </div>
        </Group>
        <Group label="数据工具" className="w-[332px] [&>div:first-child]:pl-2">
          <BigButton icon={<SplitIcon />} lines={["分列", ""]} width="w-[42px]" />
          <BigButton icon={<FlashFillIcon />} lines={["快速填充", ""]} width="w-[52px]" />
          <BigButton icon={<DedupeIcon />} lines={["删除", "重复值"]} width="w-11" />
          <BigButton icon={<ValidateIcon />} lines={["数据验", "证"]} width="w-10" arrow />
          <BigButton icon={<ConsolidateIcon />} lines={["合并计算", ""]} width="w-[52px]" />
          <BigButton icon={<RelationIcon />} lines={["关系", ""]} width="w-11" muted />
          <BigButton icon={<ModelIcon />} lines={["管理数", "据模型"]} width="w-[42px]" />
        </Group>
        <Group label="预测" className="w-[111px] [&>div:first-child]:pl-2">
          <BigButton icon={<WhatIfIcon />} lines={["模拟分析", ""]} width="w-[52px]" arrow />
          <BigButton icon={<ForecastIcon />} lines={["预测", "工作表"]} width="w-11" />
        </Group>
        <Group label="分级显示" className="w-[265px] [&>div:first-child]:pl-2" launcher>
          <BigButton icon={<GroupIcon />} lines={["组合", ""]} width="w-[42px]" arrow />
          <BigButton icon={<UngroupIcon />} lines={["取消组合", ""]} width="w-[52px]" arrow />
          <BigButton icon={<SubtotalIcon />} lines={["分类汇总", ""]} width="w-[54px]" />
          <div className="ml-[3px]">
            <SmallButton icon={<DetailIcon plus />} label="显示明细数据" muted height="h-[22px]" />
            <SmallButton icon={<DetailIcon />} label="隐藏明细数据" muted height="h-[22px]" />
          </div>
        </Group>
        <Group label="分析" className="w-[93px]">
          <div className="ml-[11px]">
            <SmallButton icon={<AnalysisIcon />} label="数据分析" height="h-[22px]" />
            <SmallButton icon={<SolverIcon />} label="规划求解" height="h-[22px]" />
          </div>
        </Group>
        <Group label="发票查验" className="w-[58px]">
          <BigButton icon={<InvoiceIcon />} lines={["发票", "查验"]} width="w-[57px]" />
        </Group>
      </div>
    </div>
  );
}

function FormulaBar() {
  return (
    <div className="shrink-0 overflow-hidden bg-[#e6e6e8]">
      <div className="h-[11px] bg-linear-to-b from-[#cfcdcc] to-[#e6e6e8]" />
      <div className="flex h-7">
        <div className="flex w-[17px] flex-col justify-center gap-[2px] pl-px">
          <i className="h-[2px] w-[2px] bg-[#a8a8a8]" />
          <i className="h-[2px] w-[2px] bg-[#a8a8a8]" />
          <i className="h-[2px] w-[2px] bg-[#a8a8a8]" />
        </div>
        <div className="flex w-[110px] items-center justify-between border border-[#c3c2c6] bg-white px-3">
          <button type="button" aria-label="取消">
            <svg width="12" height="12" viewBox="0 0 12 12" stroke="#b5b5b5" strokeWidth="1.6">
              <path d="M1 1L11 11M11 1L1 11" />
            </svg>
          </button>
          <button type="button" aria-label="输入">
            <svg width="14" height="12" viewBox="0 0 14 12" fill="none" stroke="#b5b5b5" strokeWidth="2">
              <path d="M1 6L5 10L13 1" />
            </svg>
          </button>
          <button
            type="button"
            aria-label="插入函数"
            className="text-[15px] leading-[20px] font-bold text-[#555] italic font-['Liberation_Serif',serif]"
          >
            f<span className="text-[12px]">x</span>
          </button>
        </div>
        <input
          type="text"
          aria-label="编辑栏"
          className="ml-[3px] flex-1 border-y border-l border-[#c3c2c6] bg-white px-2 text-[13px] outline-none"
        />
      </div>
      <div className="mt-[10px] -ml-[19px] flex h-[18px] border-b border-[#9aa5c0] font-['Liberation_Serif',serif] text-[14px]">
        {columns.map((name) => (
          <div
            key={name}
            className={clsx(
              "w-[72px] shrink-0 border-r border-[#b0b0b2] pt-[2px] text-center leading-[17px]",
              name === "E" ? "border-b-2 border-b-[#217346] bg-[#d2d2d3] text-[#217346]" : "text-[#222]"
            )}
          >
            {name}
          </div>
        ))}
      </div>
    </div>
  );
}

function TimerBall() {
  return (
    <div className="absolute right-[74px] bottom-[9px] h-[51px] w-[51px]">
      <svg viewBox="0 0 51 51" className="absolute inset-0" aria-hidden="true">
        <defs>
          <linearGradient id="water" x1="0" y1="0" x2="0" y2="1">
            <stop offset="0" stopColor="#62b4f2" />
            <stop offset="1" stopColor="#8fe6fb" />
          </linearGradient>
        </defs>
        <circle cx="25.5" cy="25.5" r="24" fill="url(#water)" stroke="#f4fbff" strokeWidth="3" />
        <path d="M9 12A23 23 0 0 1 42 12C36 17 30 16 24 14C17 11 12 11 9 12Z" fill="#3f8cec" />
        <path d="M28 10C33 8 38 11 42 13C38 16 33 14 28 10Z" fill="#7cc0f6" />
      </svg>
      <span className="absolute inset-0 text-center font-['Open_Sans',sans-serif] text-[13px] leading-[52px] text-[#e4f8ff]">
        01:32
      </span>
    </div>
  );
}

const FRAME = "min-w-0 border-[#d5def0]";

function Sheet() {
  return (
    <main className="relative min-h-0 flex-1 overflow-hidden bg-[#002060]">
      <Banner />
      <div className="flex items-start">
        <div className={clsx(FRAME, "mr-[19px] flex-[519_1_0%] border-y border-r")}>
          <CostShareChart />
        </div>
        <div className={clsx(FRAME, "mr-6 flex-[694_1_0%] border")}>
          <CompanyCostChart />
        </div>
        <div className={clsx(FRAME, "flex-[420_1_0%] border-y border-l")}>
          <InsuranceRateChart />
        </div>
      </div>
      <div className="mt-2 flex items-start">
        <div className={clsx(FRAME, "mr-[17px] flex-[721_1_0%] border-y border-r")}>
          <InsuranceLineChart />
        </div>
        <div className={clsx(FRAME, "mt-[3px] flex-[938_1_0%] border-y border-l")}>
          <UnitShareChart />
        </div>
      </div>
      <div className="relative mt-2 ml-[195px] h-6 w-[75px] border-2 border-b-0 border-[#2f6c58]">
        <div className="h-full border border-b-0 border-white" />
        <svg width="16" height="16" viewBox="0 0 16 16" className="absolute -top-[3px] left-3" aria-hidden="true">
          <path
            d="M5.5 1.5H10.5V5.5H14.5V10.5H10.5V14.5H5.5V10.5H1.5V5.5H5.5Z"
            fill="#fff"
            stroke="#000"
            strokeWidth="1.6"
          />
        </svg>
      </div>
      <TimerBall />
    </main>
  );
}

function SheetTabs() {
  const tab = "h-5 shrink-0 border-r border-[#999] px-3 pb-[3px] text-[13px] leading-[16px] whitespace-nowrap text-[#444]";
  return (
    <div className="flex h-7 shrink-0 items-center overflow-hidden border-t border-b border-t-[#9aa5c0] border-b-[#c6c3c3] bg-[#e6e6e8]">
      <nav className="-ml-[47px] flex flex-1 items-center">
        <button type="button" className={tab}>数据透视表</button>
        <button type="button" className="h-5 shrink-0 px-3 pb-[3px] text-[13px] leading-[16px] text-[#444]">展示图</button>
        <button
          type="button"
          className="mb-[2px] h-[25px] shrink-0 border-b-2 border-[#217346] bg-white px-[13px] text-[13px] leading-[22px] text-[#217346]"
        >
          展示图 (2)
        </button>
        <button type="button" className={tab}>数据自动汇总</button>
        <button type="button" className={tab}>社保成本分摊表</button>
        <button type="button" aria-label="新工作表" className="ml-8">
          <svg width="16" height="16" viewBox="0 0 16 16" fill="none" stroke="#777">
            <circle cx="8" cy="8" r="7.4" />
            <path d="M8 4V12M4 8H12" strokeWidth="1.8" />
          </svg>
        </button>
      </nav>
      <div className="mr-[15px] flex flex-col gap-[3px]">
        <i className="h-[2px] w-[2px] bg-[#aaa]" />
        <i className="h-[2px] w-[2px] bg-[#aaa]" />
        <i className="h-[2px] w-[2px] bg-[#aaa]" />
      </div>
      <div className="flex h-[15px] w-3/8 border border-r-0 border-[#8e8e92] bg-white">
        <button type="button" aria-label="向左滚动" className="flex w-[15px] items-center justify-center border-r border-[#8e8e92]">
          <svg width="5" height="8" viewBox="0 0 5 8">
            <path d="M5 0V8L0 4Z" fill="#222" />
          </svg>
        </button>
      </div>
    </div>
  );
}

function StatusBar() {
  return (
    <footer className="flex h-5 shrink-0 items-center overflow-hidden bg-[#f3f2f1] text-[12px] text-[#555]">
      <span className="-ml-[18px] flex-1 whitespace-nowrap">辅助功能: 调查</span>
      <button type="button" aria-label="普通" className="flex h-5 w-10 items-center justify-center bg-[#cbcbcb]">
        <svg width="14" height="14" viewBox="0 0 14 14" fill="none" stroke="#444">
          <path d="M.5 .5H13.5V13.5H.5ZM.5 4.5H13.5M.5 9.5H13.5M4.5 .5V13.5M9.5 .5V13.5" />
        </svg>
      </button>
      <button type="button" aria-label="页面布局" className="flex h-5 w-10 items-center justify-center">
        <svg width="14" height="14" viewBox="0 0 14 14" fill="none" stroke="#444">
          <path d="M.5 .5H13.5V13.5H.5ZM3.5 2.5H10.5V11.5H3.5ZM5 5.5H9M5 7.5H9M5 9.5H9" />
        </svg>
      </button>
      <button type="button" aria-label="分页预览" className="flex h-5 w-10 items-center justify-center">
        <svg width="14" height="14" viewBox="0 0 14 14" fill="none" stroke="#444">
          <path d="M.5 .5H13.5V13.5H.5ZM4.5 .5V7.5H9.5V.5M.5 7.5H4.5" />
        </svg>
      </button>
      <button type="button" aria-label="缩小" className="ml-[5px] flex h-5 w-[14px] items-center">
        <i className="h-px w-2 bg-[#444]" />
      </button>
      <input
        type="range"
        aria-label="缩放"
        defaultValue={50}
        className="h-px w-[42px] appearance-none bg-[#444] [&::-webkit-slider-thumb]:appearance-none"
      />
    </footer>
  );
}

export default function App() {
  return (
    <div className="flex h-screen flex-col overflow-hidden bg-[#e6e6e8] font-['Noto_Sans_CJK_SC',sans-serif]">
      <TitleBar />
      <Ribbon />
      <FormulaBar />
      <Sheet />
      <SheetTabs />
      <StatusBar />
    </div>
  );
}
